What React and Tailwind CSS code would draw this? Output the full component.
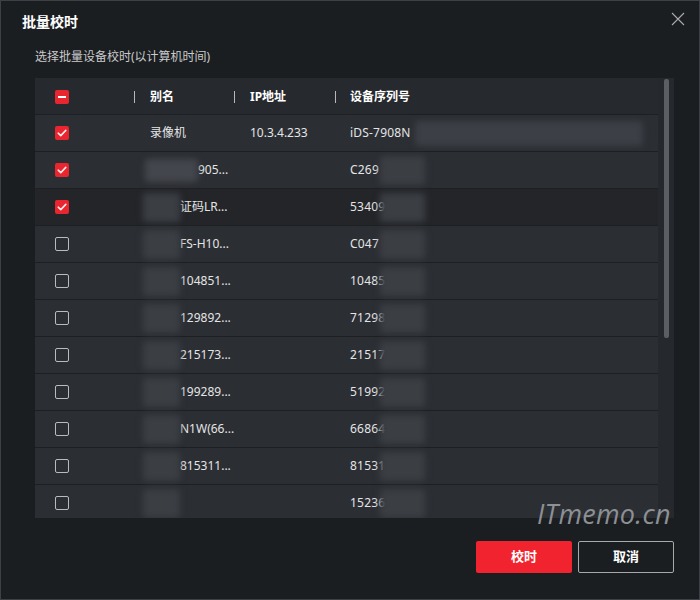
import React from "react";

const rows = [
  { checked: true, name: "录像机", ip: "10.3.4.233", serial: "iDS-7908N", nameBlur: null, serialBlur: "long" },
  { checked: true, name: "905...", ip: "", serial: "C269", nameBlur: "wide", serialBlur: "short" },
  { checked: true, name: "证码LR...", ip: "", serial: "53409", nameBlur: "norm", serialBlur: "short", dark: true },
  { checked: false, name: "FS-H10...", ip: "", serial: "C047", nameBlur: "norm", serialBlur: "short" },
  { checked: false, name: "104851...", ip: "", serial: "10485", nameBlur: "norm", serialBlur: "short" },
  { checked: false, name: "129892...", ip: "", serial: "71298", nameBlur: "norm", serialBlur: "short" },
  { checked: false, name: "215173...", ip: "", serial: "21517", nameBlur: "norm", serialBlur: "short" },
  { checked: false, name: "199289...", ip: "", serial: "51992", nameBlur: "norm", serialBlur: "short" },
  { checked: false, name: "N1W(66...", ip: "", serial: "66864", nameBlur: "norm", serialBlur: "short" },
  { checked: false, name: "815311...", ip: "", serial: "81531", nameBlur: "norm", serialBlur: "short" },
  { checked: false, name: "", ip: "", serial: "15236", nameBlur: "norm", serialBlur: "short" },
];

function Check({ state }) {
  if (state === "checked") {
    return (
      <span className="flex h-[14px] w-[14px] items-center justify-center rounded-[2px] bg-[#e9252f]">
        <svg width="10" height="8" viewBox="0 0 10 8" fill="none">
          <path d="M1.2 4.2 L3.8 6.6 L8.8 1.4" stroke="#ffe9ea" strokeWidth="1.6" strokeLinecap="round" strokeLinejoin="round" />
        </svg>
      </span>
    );
  }
  if (state === "ind") {
    return (
      <span className="flex h-[14px] w-[14px] items-center justify-center rounded-[2px] bg-[#e9252f]">
        <span className="h-[2px] w-[8px] bg-white" />
      </span>
    );
  }
  return <span className="block h-[14px] w-[14px] rounded-[2px] border border-[#b9bbbe]" />;
}

function Sep() {
  return <span className="block h-[12px] w-px bg-[#b8b8b8]" />;
}

export default function App() {
  return (
    <div
      className="relative h-[600px] w-[700px] overflow-hidden border border-[#3d4045] bg-[#1b1e21] text-[#e2e3e4]"
      style={{ fontFamily: '"Noto Sans", "Noto Sans CJK SC", sans-serif' }}
    >
      {/* title bar */}
      <div className="flex h-[40px] items-center justify-between pl-[21px] pr-[14px]">
        <span className="text-[14px] font-bold text-white">批量校时</span>
        <svg width="14" height="14" viewBox="0 0 14 14" className="mt-[-4px]">
          <path d="M1 1 L13 13 M13 1 L1 13" stroke="#a9abad" strokeWidth="1.1" />
        </svg>
      </div>
      <div className="pl-[34px] pt-[6px] text-[12px] leading-[20px] text-[#c9cacb]">选择批量设备校时(以计算机时间)</div>

      {/* table area */}
      <div className="ml-[34px] mt-[11px] flex h-[440px] w-[639px] bg-[#2a2d31]">
        <div className="h-full w-[623px] overflow-hidden">
          {/* header */}
          <div className="flex h-[37px] items-center border-b border-[#1d1f22] bg-[#26292d] pt-[2px] text-[12px] font-bold text-white">
            <div className="flex w-[99px] items-center pl-[20px]">
              <Check state="ind" />
            </div>
            <Sep />
            <div className="w-[99px] pl-[15px]">别名</div>
            <Sep />
            <div className="w-[100px] pl-[15px]">IP地址</div>
            <Sep />
            <div className="pl-[14px]">设备序列号</div>
          </div>
          {rows.map((r, i) => (
            <div
              key={i}
              className={
                "relative flex h-[37px] items-center border-b border-[#1d1f22] text-[12px] text-[#e4e5e6] " +
                (r.dark ? "bg-[#232529]" : "bg-[#2b2e33]")
              }
            >
              <div className="flex w-[99px] items-center pl-[20px]">
                <Check state={r.checked ? "checked" : "un"} />
              </div>
              <div className="w-px" />
              <div className={"w-[99px] whitespace-nowrap " + (r.nameBlur === null ? "pl-[15px]" : r.nameBlur === "wide" ? "pl-[63px]" : "pl-[45px]")}>
                {r.name}
              </div>
              <div className="w-px" />
              <div className="w-[100px] pl-[15px]">{r.ip}</div>
              <div className="w-px" />
              <div className="pl-[14px] tracking-[0.2px]">{r.serial}</div>

              {r.nameBlur === "wide" && (
                <div className="absolute left-[110px] top-[7px] h-[23px] w-[53px] rounded-[3px] bg-[#43464c] blur-[3px]" />
              )}
              {r.nameBlur === "norm" && (
                <div className="absolute left-[108px] top-[4px] h-[29px] w-[37px] rounded-[3px] bg-[#3b3e43] blur-[3px]" />
              )}
              {r.serialBlur === "long" && (
                <div className="absolute left-[380px] top-[6px] h-[25px] w-[228px] rounded-[3px] bg-[#3c3f45] blur-[3px]" />
              )}
              {r.serialBlur === "short" && (
                <div className="absolute left-[345px] top-[4px] h-[29px] w-[45px] rounded-[3px] bg-[#3b3e43] blur-[3px]" />
              )}
            </div>
          ))}
        </div>
        {/* scrollbar */}
        <div className="flex h-full w-[16px] justify-start bg-[#25282c] pl-[6px]">
          <div className="mt-[1px] h-[259px] w-[5px] rounded-[2px] bg-[#5b5e63]" />
        </div>
      </div>

      {/* watermark */}
      <div
        className="absolute left-[536px] top-[493px] text-[27px] italic tracking-[0.3px] text-[#8d9094]"
        style={{ fontFamily: '"Open Sans", "DejaVu Sans", sans-serif' }}
      >
        ITmemo.cn
      </div>

      {/* buttons */}
      <div className="mt-[23px] flex justify-end gap-[6px] pr-[25px]">
        <button className="h-[32px] w-[96px] rounded-[2px] bg-[#f0232f] text-[13px] font-bold text-white">校时</button>
        <button className="h-[32px] w-[96px] rounded-[2px] border border-[#a7a9ab] bg-transparent text-[13px] font-bold text-white">取消</button>
      </div>
    </div>
  );
}
